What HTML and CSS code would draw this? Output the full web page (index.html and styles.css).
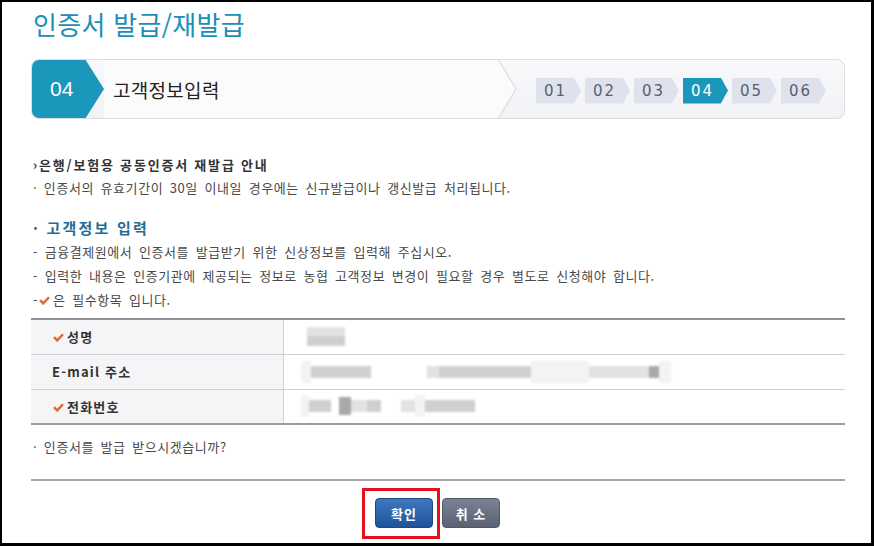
FILE: index.html
```html
<!DOCTYPE html>
<html lang="ko">
<head>
  <meta charset="UTF-8" />
  <title>인증서 발급/재발급</title>
  <link rel="stylesheet" href="styles.css">
</head>
<body>
  <div class="page">
    <h1 class="title">인증서 발급/재발급</h1>

    <div class="step-bar">
      <div class="step-now">04</div>
      <div class="step-name">고객정보입력</div>
      <svg class="step-sep" width="24" height="60" viewBox="0 0 24 60">
        <polygon points="0,0 4,0 22,30 4,60 0,60" fill="#fbfbfc" />
        <polyline points="4,0 22,30 4,60" fill="none" stroke="#dcdde2" stroke-width="1.2" />
      </svg>
      <div class="steps">
        <span class="step">01</span>
        <span class="step">02</span>
        <span class="step">03</span>
        <span class="step on">04</span>
        <span class="step">05</span>
        <span class="step">06</span>
      </div>
    </div>

    <div class="notice">
      <h3 class="notice-head">›은행/보험용 공동인증서 재발급 안내</h3>
      <p class="line">· 인증서의 유효기간이 30일 이내일 경우에는 신규발급이나 갱신발급 처리됩니다.</p>
    </div>

    <div class="notice second">
      <h3 class="notice-head blue">· 고객정보 입력</h3>
      <p class="line tall">- 금융결제원에서 인증서를 발급받기 위한 신상정보를 입력해 주십시오.</p>
      <p class="line tall">- 입력한 내용은 인증기관에 제공되는 정보로 농협 고객정보 변경이 필요할 경우 별도로 신청해야 합니다.</p>
      <p class="line tall">-<svg class="check" width="11" height="9" viewBox="0 0 11 9"><path d="M1 4.2 L4.2 7.4 L10 1.2" fill="none" stroke="#e0692f" stroke-width="2.4" /></svg>은 필수항목 입니다.</p>
    </div>

    <table class="info">
      <tr>
        <th><svg class="check" width="11" height="9" viewBox="0 0 11 9"><path d="M1 4.2 L4.2 7.4 L10 1.2" fill="none" stroke="#e0692f" stroke-width="2.4" /></svg>성명</th>
        <td>
          <div class="blur">
            <div class="blk-col">
              <span class="blk light" style="width:38px;height:9px"></span>
              <span class="blk" style="width:38px;height:10px"></span>
            </div>
          </div>
        </td>
      </tr>
      <tr>
        <th>E-mail 주소</th>
        <td>
          <div class="blur">
            <span class="blk faint" style="width:10px"></span>
            <span class="blk" style="width:60px"></span>
            <span class="gap" style="width:56px"></span>
            <span class="blk light" style="width:12px"></span>
            <span class="blk" style="width:92px"></span>
            <span class="blk faint" style="width:58px"></span>
            <span class="blk light" style="width:60px"></span>
            <span class="blk dark" style="width:10px"></span>
            <span class="blk faint" style="width:12px"></span>
          </div>
        </td>
      </tr>
      <tr>
        <th><svg class="check" width="11" height="9" viewBox="0 0 11 9"><path d="M1 4.2 L4.2 7.4 L10 1.2" fill="none" stroke="#e0692f" stroke-width="2.4" /></svg>전화번호</th>
        <td>
          <div class="blur">
            <span class="blk faint" style="width:8px"></span>
            <span class="blk" style="width:22px"></span>
            <span class="gap" style="width:8px"></span>
            <span class="blk dark tall" style="width:12px"></span>
            <span class="blk light" style="width:16px"></span>
            <span class="blk" style="width:14px"></span>
            <span class="gap" style="width:20px"></span>
            <span class="blk light" style="width:14px"></span>
            <span class="blk faint" style="width:10px"></span>
            <span class="blk" style="width:50px"></span>
          </div>
        </td>
      </tr>
    </table>

    <p class="line question">· 인증서를 발급 받으시겠습니까?</p>

    <div class="actions">
      <div class="mark">
        <button class="btn ok">확인</button>
      </div>
      <button class="btn cancel">취 소</button>
    </div>
  </div>
</body>
</html>
```

FILE: styles.css
```css
* {
  box-sizing: border-box;
}

body {
  margin: 0;
  padding: 0;
  background: #fff;
  font-family: "Noto Sans CJK KR", "Noto Sans", sans-serif;
  color: #444;
}

.page {
  width: 874px;
  height: 546px;
  border: 2px solid #000;
  border-right-width: 3px;
  border-bottom-width: 3px;
  padding: 6px 26px 0 29px;
  overflow: hidden;
}

.title {
  margin: 0;
  font-size: 26px;
  line-height: 32px;
  font-weight: 400;
  letter-spacing: 0.3px;
  color: #1b8fb6;
  padding-left: 2px;
}

/* step bar */
.step-bar {
  margin-top: 19px;
  height: 60px;
  display: flex;
  align-items: center;
  border: 1px solid #dcdde1;
  border-radius: 8px;
  background: linear-gradient(#f9f9fb, #f1f2f5);
  overflow: hidden;
}

.step-now {
  width: 73px;
  height: 60px;
  margin: -1px 0 -1px -1px;
  padding-left: 19px;
  display: flex;
  align-items: center;
  font-family: "Liberation Sans", "Noto Sans", sans-serif;
  font-size: 21px;
  color: #fff;
  background: #1a97bb;
  border-radius: 8px 0 0 8px;
  clip-path: polygon(0 0, 74% 0, 100% 50%, 74% 100%, 0 100%);
}

.step-name {
  flex: 1;
  align-self: stretch;
  display: flex;
  align-items: center;
  padding-left: 9px;
  font-size: 19px;
  letter-spacing: 0.3px;
  color: #222;
  background: #fbfbfc;
}

.step-sep {
  display: block;
  flex: none;
  margin-right: 18px;
}

.steps {
  display: flex;
  gap: 4px;
  margin: 3px 18px 0 0;
}

.step {
  width: 45px;
  height: 26px;
  padding-left: 8px;
  display: flex;
  align-items: center;
  font-family: "DejaVu Sans", sans-serif;
  font-size: 15px;
  letter-spacing: 2px;
  color: #576072;
  background: #dfe2ec;
  clip-path: polygon(0 0, 84% 0, 100% 50%, 84% 100%, 0 100%);
}

.step.on {
  background: #1a97bb;
  color: #fff;
}

/* notices */
.notice {
  margin-top: 34px;
  padding-left: 2px;
}

.notice.second {
  margin-top: 17px;
}

.notice-head {
  margin: 0;
  font-size: 13px;
  line-height: 24px;
  font-weight: 700;
  letter-spacing: 1.8px;
  color: #333;
}

.notice-head.blue {
  font-size: 15px;
  letter-spacing: 2.2px;
  color: #1f6e98;
}

.line {
  margin: 0;
  font-size: 13px;
  line-height: 22px;
  letter-spacing: 0.55px;
  word-spacing: 2.5px;
  color: #4a4a4a;
}

.line.tall {
  line-height: 24px;
}

.check {
  display: inline-block;
  vertical-align: 0;
  margin: 0 3px 0 1px;
}

/* table */
.info {
  width: 100%;
  margin-top: 6px;
  border-collapse: collapse;
  border-top: 2px solid #8e9197;
  border-bottom: 2px solid #9a9ca1;
}

.info tr {
  height: 35px;
}

.info tr + tr {
  border-top: 1px solid #cfd0d3;
}

.info th {
  width: 252px;
  padding-left: 21px;
  text-align: left;
  font-size: 13px;
  font-weight: 700;
  letter-spacing: 1.2px;
  color: #333;
  background: #f5f5f7;
  border-right: 1px solid #cfd0d3;
}

.info td {
  padding-left: 17px;
}

.blur {
  display: flex;
  align-items: center;
  filter: blur(1px);
}

.blk-col {
  display: flex;
  flex-direction: column;
  margin-left: 6px;
}

.blk {
  display: inline-block;
  height: 12px;
  background: #cfcfd2;
}

.blk.light {
  background: #e2e2e4;
}

.blk.faint {
  height: 22px;
  background: #f3f3f4;
}

.blk.dark {
  background: #a9a9ac;
}

.blk.tall {
  height: 18px;
}

.gap {
  display: inline-block;
  height: 12px;
}

.question {
  margin-top: 10px;
  line-height: 24px;
  padding-left: 2px;
}

/* buttons */
.actions {
  margin-top: 20px;
  padding-top: 7px;
  border-top: 2px solid #a3a5a9;
  display: flex;
  justify-content: center;
  align-items: flex-start;
  gap: 2px;
  padding-right: 14px;
}

.mark {
  width: 78px;
  height: 51px;
  border: 3px solid #e5101c;
  padding: 7px 0 0 10px;
}

.btn {
  width: 58px;
  height: 30px;
  margin: 0;
  padding: 0;
  border-radius: 4px;
  font-family: "Noto Sans CJK KR", sans-serif;
  font-size: 13px;
  font-weight: 700;
  letter-spacing: 1px;
  color: #fff;
  cursor: pointer;
}

.btn.ok {
  border: 1px solid #1c4a86;
  background: linear-gradient(#3f78bd, #1f5399);
}

.btn.cancel {
  margin-top: 10px;
  border: 1px solid #505868;
  background: linear-gradient(#7a8293, #596173);
}
```
